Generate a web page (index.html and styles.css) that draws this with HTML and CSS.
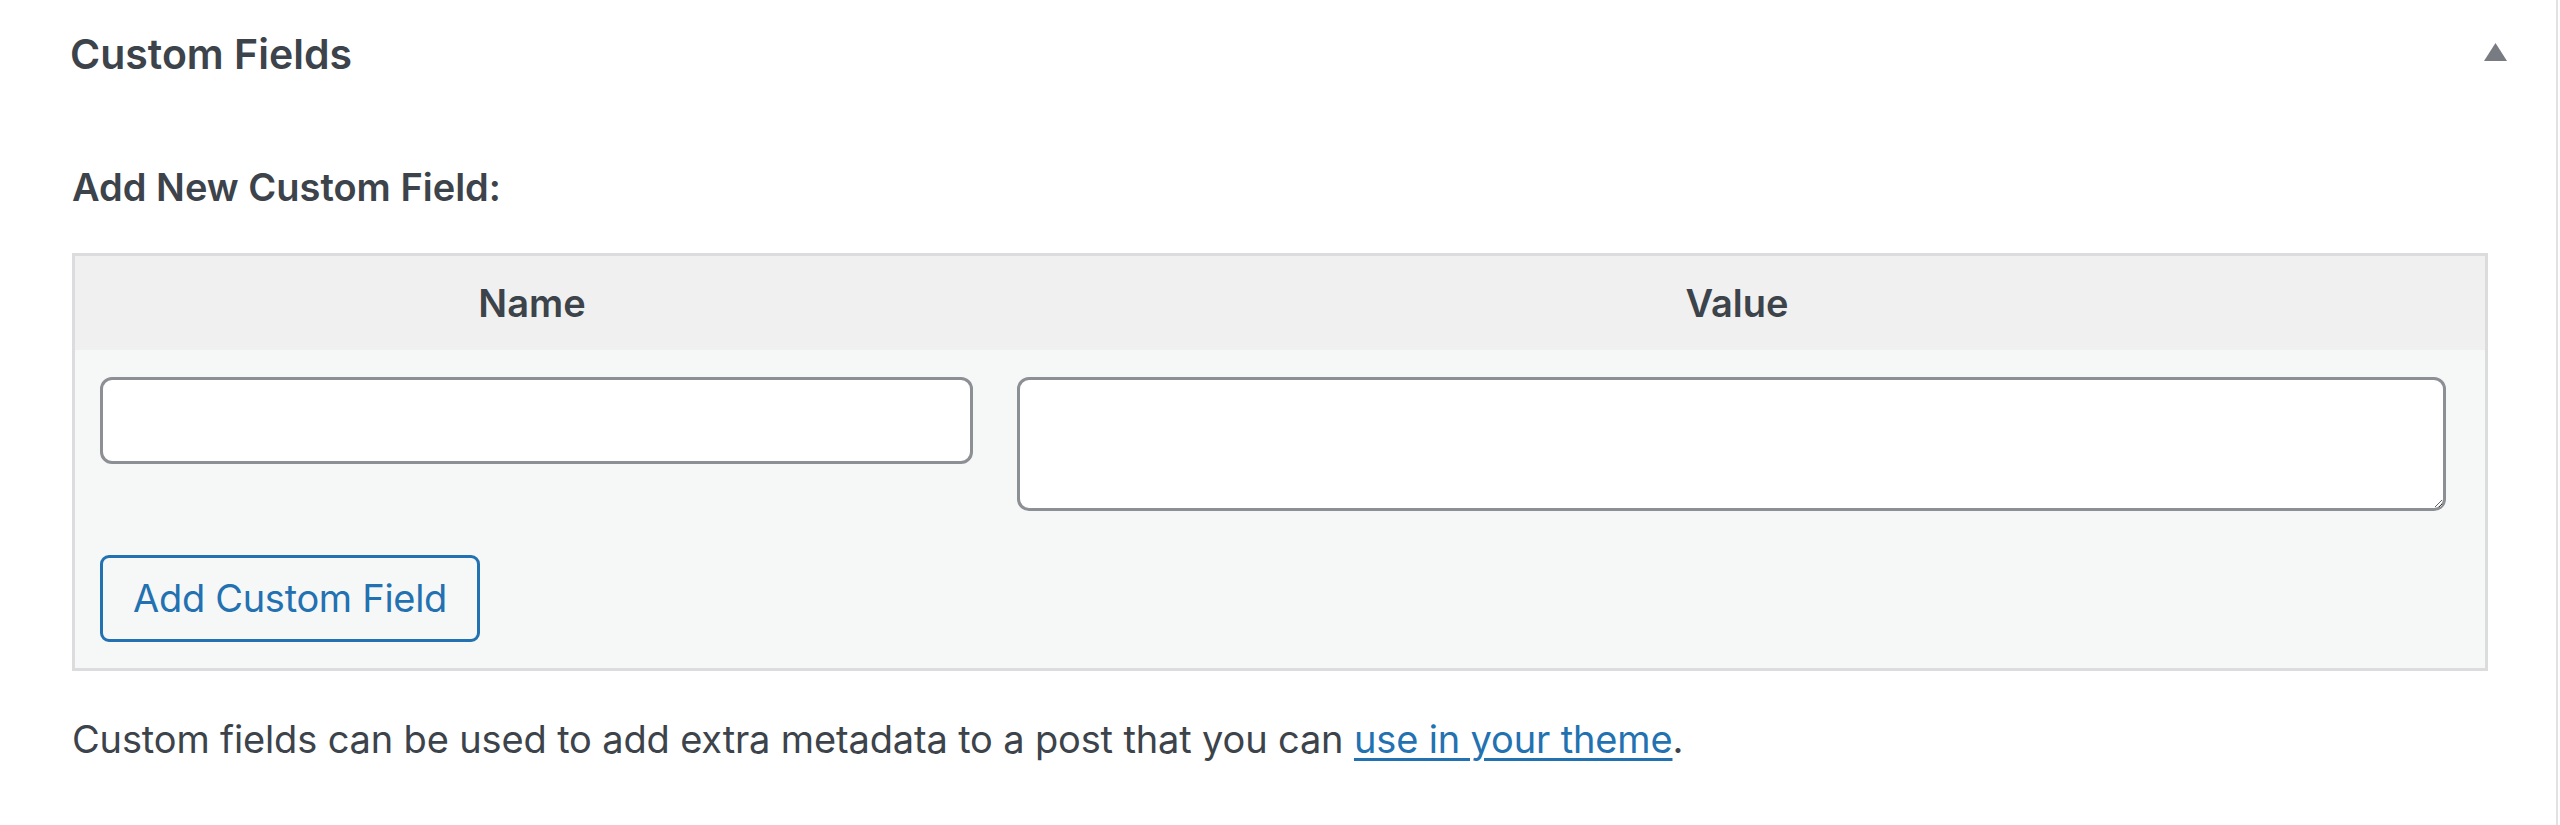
FILE: index.html
```html
<!DOCTYPE html>
<html lang="en">
<head>
<meta charset="utf-8">
<title>Custom Fields</title>
<link rel="stylesheet" href="styles.css">
</head>
<body>
<div class="postbox">
  <div class="postbox-header">
    <h2 class="hndle">Custom Fields</h2>
    <button class="toggle" type="button" aria-label="Toggle panel: Custom Fields">
      <svg class="toggle-icon" width="23" height="18" viewBox="0 0 23 18" aria-hidden="true"><polygon points="11.5,0 23,18 0,18" fill="currentColor"/></svg>
    </button>
  </div>
  <div class="inside">
    <p class="add-label"><strong>Add New Custom Field:</strong></p>
    <table class="newmeta">
      <colgroup><col class="col-name"><col class="col-value"></colgroup>
      <thead>
        <tr><th>Name</th><th>Value</th></tr>
      </thead>
      <tbody>
        <tr class="fields-row">
          <td class="cell-name"><input class="field" type="text" aria-label="Name"></td>
          <td class="cell-value"><textarea class="field area" aria-label="Value"></textarea></td>
        </tr>
        <tr class="submit-row">
          <td colspan="2" class="cell-submit"><button class="button" type="button">Add Custom Field</button></td>
        </tr>
      </tbody>
    </table>
    <p class="note">Custom fields can be used to add extra metadata to a post that you can <a href="#">use in your theme</a>.</p>
  </div>
</div>
</body>
</html>
```
FILE: styles.css
```css
html, body {
  margin: 0;
  padding: 0;
  background: #ffffff;
}

body {
  font-family: Inter, Roboto, "Noto Sans", sans-serif;
  color: #3c434a;
  font-size: 38px;
}

.postbox {
  width: 2558px;
  height: 825px;
  box-sizing: border-box;
  border-right: 2px solid #e2e2e2;
  background: #ffffff;
}

.postbox-header {
  height: 108px;
  display: flex;
  align-items: center;
  justify-content: space-between;
  padding: 0 49px 0 70px;
}

.hndle {
  margin: 0;
  font-size: 41px;
  font-weight: 600;
  line-height: 54px;
  color: #3c434a;
}

.toggle {
  border: 0;
  background: none;
  padding: 0;
  margin: 0 0 4px 0;
  color: #787c82;
  display: flex;
}

.inside {
  padding: 52px 68px 0 72px;
}

.add-label {
  margin: 0;
  line-height: 54px;
  font-weight: 600;
}

.add-label strong {
  font-weight: 600;
}

.newmeta {
  width: 100%;
  table-layout: fixed;
  border-collapse: separate;
  border-spacing: 0;
  border: 3px solid #dcdcde;
  margin-top: 39px;
}

.col-name { width: 914px; }
.col-value { width: 1496px; }

.newmeta th {
  height: 94px;
  padding: 0;
  background: #f0f0f0;
  font-size: 38px;
  font-weight: 600;
  line-height: 54px;
  text-align: center;
  color: #3c434a;
}

.newmeta td {
  background: #f6f7f7;
  vertical-align: top;
}

.cell-name {
  padding: 27px 16px 0 25px;
}

.cell-value {
  padding: 27px 39px 0 28px;
}

.field {
  display: block;
  box-sizing: border-box;
  width: 100%;
  margin: 0;
  border: 3px solid #8c8f94;
  border-radius: 12px;
  background: #ffffff;
  font: inherit;
  color: #2c3338;
  padding: 0 24px;
}

input.field {
  height: 87px;
}

textarea.field.area {
  height: 134px;
  resize: vertical;
  padding: 6px 24px;
}

.cell-submit {
  padding: 44px 0 26px 25px;
}

.button {
  display: block;
  box-sizing: border-box;
  height: 87px;
  padding: 0 30px;
  border: 3px solid #2271b1;
  border-radius: 9px;
  background: #f6f7f7;
  color: #2271b1;
  font-family: inherit;
  font-size: 38px;
  line-height: 81px;
  letter-spacing: -0.3px;
}

.note {
  margin: 41px 0 0 0;
  line-height: 54px;
  letter-spacing: -0.15px;
}

.note a {
  color: #2271b1;
  text-decoration: underline;
  text-decoration-thickness: 3px;
  text-underline-offset: 5px;
}
```
